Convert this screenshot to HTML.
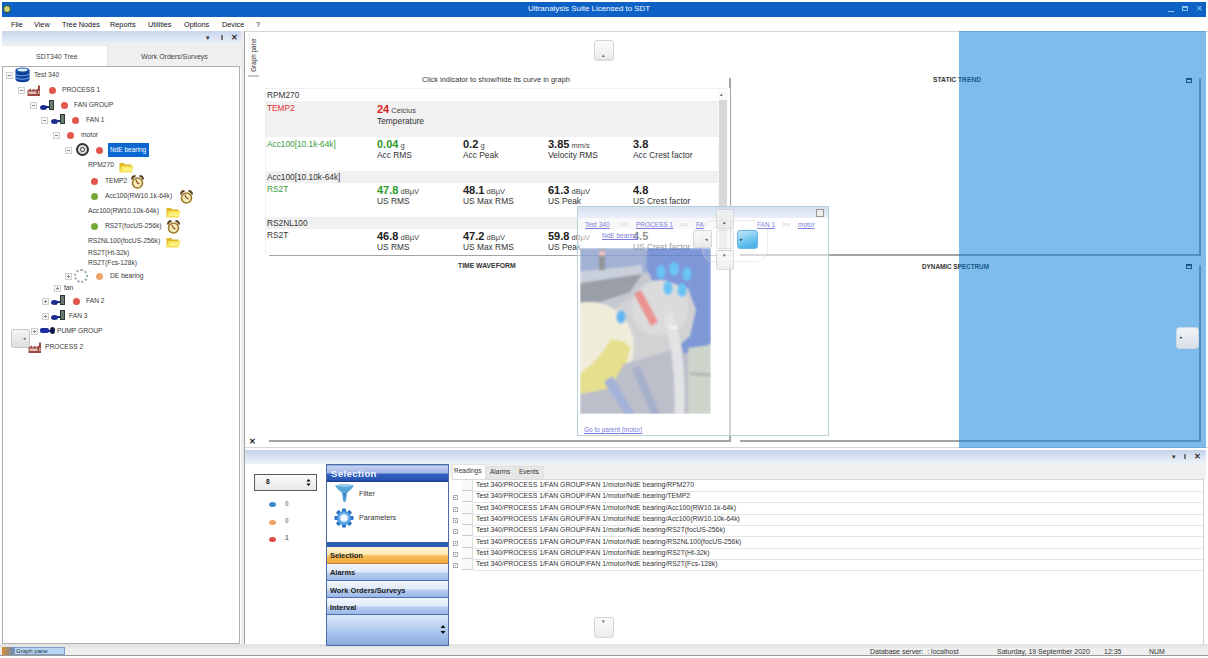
<!DOCTYPE html>
<html><head><meta charset="utf-8">
<style>
*{margin:0;padding:0;box-sizing:border-box}
html,body{width:1208px;height:658px;overflow:hidden;background:#fff;font-family:"Liberation Sans",sans-serif;color:#333}
.a{position:absolute}
.t{position:absolute;white-space:nowrap;line-height:1}
</style></head><body><div id="root" style="position:absolute;left:0;top:0;width:1208px;height:658px">
<div class="a" style="left:0;top:0;width:1208px;height:658px;background:#fff"></div>

<!-- TITLE BAR -->
<div class="a" style="left:2px;top:2px;width:1204px;height:14.5px;background:#0e62c6"></div>
<div class="a" style="left:3px;top:5px;width:8px;height:8px;border-radius:50%;background:#c9d27a;border:1px solid #3a4a20"></div>
<div class="t" style="left:528px;top:5px;font-size:7.95px;color:#f4f8ff">Ultranalysis Suite Licensed to SDT</div>
<div class="a" style="left:1168px;top:11px;width:6px;height:1px;background:#8cc4f4"></div>
<div class="a" style="left:1182px;top:6px;width:6px;height:5px;border:1px solid #8cc4f4;border-top-width:2px"></div>
<div class="t" style="left:1196px;top:5px;font-size:7.5px;color:#8cc4f4">&#x2715;</div>

<!-- MENU -->
<div class="t" style="left:11px;top:21px;font-size:7.3px;color:#111">File</div>
<div class="t" style="left:34px;top:21px;font-size:7.3px;color:#111">View</div>
<div class="t" style="left:62px;top:21px;font-size:7.3px;color:#111">Tree Nodes</div>
<div class="t" style="left:110px;top:21px;font-size:7.3px;color:#111">Reports</div>
<div class="t" style="left:148px;top:21px;font-size:7.3px;color:#111">Utilities</div>
<div class="t" style="left:184px;top:21px;font-size:7.3px;color:#111">Options</div>
<div class="t" style="left:222px;top:21px;font-size:7.3px;color:#111">Device</div>
<div class="t" style="left:256px;top:21px;font-size:7.3px;color:#111">?</div>


<!-- LEFT PANEL -->
<div class="a" style="left:2px;top:31px;width:240px;height:14px;background:linear-gradient(#c8d6ec,#e2eaf6 70%,#edf1f8)"></div>
<div class="a" style="left:241px;top:31px;width:3px;height:614px;background:#ececec"></div>
<div class="a" style="left:244px;top:31px;width:1px;height:614px;background:#a0a0a0"></div>
<div class="t" style="left:206px;top:34px;font-size:7px;color:#333">&#x25BE;</div>
<div class="a" style="left:221px;top:35px;width:2px;height:5px;border:1px solid #777;border-bottom-width:1px"></div>
<div class="t" style="left:231px;top:34px;font-size:8px;color:#333;font-weight:bold">&#x2715;</div>
<div class="a" style="left:2px;top:45px;width:239px;height:22px;background:#efefef"></div>
<div class="a" style="left:2px;top:45px;width:106px;height:22px;background:#fff;border-top:1px solid #e8e8e8;border-right:1px solid #e0e0e0"></div>
<div class="t" style="left:36px;top:53px;font-size:7px;color:#444">SDT340 Tree</div>
<div class="t" style="left:141px;top:53px;font-size:7px;color:#444">Work Orders/Surveys</div>
<div class="a" style="left:2px;top:66px;width:238px;height:578px;border:1px solid #b0b0b0;background:#fff"></div>
<!-- TREE -->
<div class="a" style="left:6px;top:72px;width:7px;height:7px;border:1px solid #cfcfcf;background:#f8f8f8"><div class="a" style="left:1px;top:2px;width:3px;height:1px;background:#888"></div></div>
<svg class="a" style="left:15px;top:67px" width="15" height="16" viewBox="0 0 15 16"><path d="M0.5 3 V12.5 A7 2.8 0 0 0 14.5 12.5 V3 Z" fill="#0f3e94"/><path d="M0.5 6.2 A7 2.6 0 0 0 14.5 6.2" stroke="#6aa4ec" stroke-width="1.1" fill="none"/><path d="M0.5 9.6 A7 2.6 0 0 0 14.5 9.6" stroke="#6aa4ec" stroke-width="1.1" fill="none"/><ellipse cx="7.5" cy="3" rx="7" ry="2.6" fill="#1a56b0"/><ellipse cx="7.5" cy="3" rx="5" ry="1.4" fill="#e0f0ff"/></svg>
<div class="t" style="left:34px;top:71px;font-size:6.7px;color:#3a3a3a;margin-top:1px">Test 340</div>
<div class="a" style="left:18px;top:87px;width:7px;height:7px;border:1px solid #cfcfcf;background:#f8f8f8"><div class="a" style="left:1px;top:2px;width:3px;height:1px;background:#888"></div></div>
<svg class="a" style="left:27px;top:85px" width="15" height="11" viewBox="0 0 15 11"><path d="M0.5 11 V5.5 L4 3.5 V5.5 L7.5 3.5 V5.5 L11 3.5 V0.5 H13 V11 Z" fill="#9a4a44"/><rect x="1.5" y="6.5" width="8" height="2.5" fill="#e4bcb4"/><rect x="11" y="6" width="1.5" height="3" fill="#d8a8a0"/></svg>
<div class="a" style="left:49px;top:87px;width:7px;height:7px;border-radius:50%;background:#e2574c"></div>
<div class="t" style="left:62px;top:86px;font-size:6.7px;color:#3a3a3a;margin-top:1px">PROCESS 1</div>
<div class="a" style="left:30px;top:102px;width:7px;height:7px;border:1px solid #cfcfcf;background:#f8f8f8"><div class="a" style="left:1px;top:2px;width:3px;height:1px;background:#888"></div></div>
<div class="a" style="left:40px;top:99px;width:15px;height:12px"><div class="a" style="left:0;top:6px;width:7px;height:5px;border-radius:50%;background:#1c2c8c"></div><div class="a" style="left:6px;top:7px;width:3px;height:2px;background:#1c2c8c"></div><div class="a" style="left:9px;top:1px;width:5px;height:10px;background:#6a7a70;border:1px solid #2a3a30"></div></div>
<div class="a" style="left:61px;top:102px;width:7px;height:7px;border-radius:50%;background:#e2574c"></div>
<div class="t" style="left:74px;top:101px;font-size:6.7px;color:#3a3a3a;margin-top:1px">FAN GROUP</div>
<div class="a" style="left:41px;top:117px;width:7px;height:7px;border:1px solid #cfcfcf;background:#f8f8f8"><div class="a" style="left:1px;top:2px;width:3px;height:1px;background:#888"></div></div>
<div class="a" style="left:51px;top:113px;width:15px;height:12px"><div class="a" style="left:0;top:6px;width:7px;height:5px;border-radius:50%;background:#1c2c8c"></div><div class="a" style="left:6px;top:7px;width:3px;height:2px;background:#1c2c8c"></div><div class="a" style="left:9px;top:1px;width:5px;height:10px;background:#6a7a70;border:1px solid #2a3a30"></div></div>
<div class="a" style="left:72px;top:117px;width:7px;height:7px;border-radius:50%;background:#e2574c"></div>
<div class="t" style="left:86px;top:116px;font-size:6.7px;color:#3a3a3a;margin-top:1px">FAN 1</div>
<div class="a" style="left:53px;top:132px;width:7px;height:7px;border:1px solid #cfcfcf;background:#f8f8f8"><div class="a" style="left:1px;top:2px;width:3px;height:1px;background:#888"></div></div>
<div class="a" style="left:67px;top:132px;width:7px;height:7px;border-radius:50%;background:#e2574c"></div>
<div class="t" style="left:81px;top:131px;font-size:6.7px;color:#3a3a3a;margin-top:1px">motor</div>
<div class="a" style="left:65px;top:147px;width:7px;height:7px;border:1px solid #cfcfcf;background:#f8f8f8"><div class="a" style="left:1px;top:2px;width:3px;height:1px;background:#888"></div></div>
<div class="a" style="left:76px;top:143px;width:13px;height:13px;border-radius:50%;border:2px solid #333;background:#ddd"><div class="a" style="left:2px;top:2px;width:5px;height:5px;border-radius:50%;border:1px solid #333;background:#fff"></div></div>
<div class="a" style="left:96px;top:147px;width:7px;height:7px;border-radius:50%;background:#e2574c"></div>
<div class="a" style="left:108px;top:143px;width:41px;height:14px;background:#0a68d0"></div>
<div class="t" style="left:110px;top:147px;font-size:6.5px;color:#fff;">NdE bearing</div>
<div class="t" style="left:88px;top:161px;font-size:6.7px;color:#3a3a3a;margin-top:1px">RPM270</div>
<svg class="a" style="left:119px;top:162px" width="15" height="11" viewBox="0 0 15 11"><path d="M0.5 1 L5 1 L6.5 2.5 L12.5 2.5 L12.5 10 L0.5 10 Z" fill="#e0b828"/><path d="M2 4 L14.5 4 L12.5 10.5 L0.5 10.5 Z" fill="#f8e050"/><path d="M4 5.5 L13 5.5 L12 9 L3 9 Z" fill="#fcf080"/></svg>
<div class="a" style="left:91px;top:178px;width:7px;height:7px;border-radius:50%;background:#e2574c"></div>
<div class="t" style="left:105px;top:177px;font-size:6.7px;color:#3a3a3a;margin-top:1px">TEMP2</div>
<svg class="a" style="left:131px;top:175px" width="13" height="14" viewBox="0 0 13 14"><path d="M1 4.5 Q1 1 4.5 1" stroke="#5a4020" stroke-width="2" fill="none"/><path d="M8.5 1 Q12 1 12 4.5" stroke="#5a4020" stroke-width="2" fill="none"/><circle cx="6.5" cy="8" r="5" fill="#f2ecb8" stroke="#a07828" stroke-width="1.6"/><path d="M6.5 8 L4.8 4.8 M6.5 8 L8.5 9" stroke="#8a3a20" stroke-width="1.1"/></svg>
<div class="a" style="left:91px;top:193px;width:7px;height:7px;border-radius:50%;background:#74a83a"></div>
<div class="t" style="left:105px;top:192px;font-size:6.7px;color:#3a3a3a;margin-top:1px">Acc100(RW10.1k-64k)</div>
<svg class="a" style="left:180px;top:190px" width="13" height="14" viewBox="0 0 13 14"><path d="M1 4.5 Q1 1 4.5 1" stroke="#5a4020" stroke-width="2" fill="none"/><path d="M8.5 1 Q12 1 12 4.5" stroke="#5a4020" stroke-width="2" fill="none"/><circle cx="6.5" cy="8" r="5" fill="#f2ecb8" stroke="#a07828" stroke-width="1.6"/><path d="M6.5 8 L4.8 4.8 M6.5 8 L8.5 9" stroke="#8a3a20" stroke-width="1.1"/></svg>
<div class="t" style="left:88px;top:207px;font-size:6.7px;color:#3a3a3a;margin-top:1px">Acc100(RW10.10k-64k)</div>
<svg class="a" style="left:166px;top:207px" width="15" height="11" viewBox="0 0 15 11"><path d="M0.5 1 L5 1 L6.5 2.5 L12.5 2.5 L12.5 10 L0.5 10 Z" fill="#e0b828"/><path d="M2 4 L14.5 4 L12.5 10.5 L0.5 10.5 Z" fill="#f8e050"/><path d="M4 5.5 L13 5.5 L12 9 L3 9 Z" fill="#fcf080"/></svg>
<div class="a" style="left:91px;top:223px;width:7px;height:7px;border-radius:50%;background:#74a83a"></div>
<div class="t" style="left:105px;top:222px;font-size:6.7px;color:#3a3a3a;margin-top:1px">RS2T(focUS-256k)</div>
<svg class="a" style="left:167px;top:220px" width="13" height="14" viewBox="0 0 13 14"><path d="M1 4.5 Q1 1 4.5 1" stroke="#5a4020" stroke-width="2" fill="none"/><path d="M8.5 1 Q12 1 12 4.5" stroke="#5a4020" stroke-width="2" fill="none"/><circle cx="6.5" cy="8" r="5" fill="#f2ecb8" stroke="#a07828" stroke-width="1.6"/><path d="M6.5 8 L4.8 4.8 M6.5 8 L8.5 9" stroke="#8a3a20" stroke-width="1.1"/></svg>
<div class="t" style="left:88px;top:237px;font-size:6.7px;color:#3a3a3a;margin-top:1px">RS2NL100(focUS-256k)</div>
<svg class="a" style="left:166px;top:237px" width="15" height="11" viewBox="0 0 15 11"><path d="M0.5 1 L5 1 L6.5 2.5 L12.5 2.5 L12.5 10 L0.5 10 Z" fill="#e0b828"/><path d="M2 4 L14.5 4 L12.5 10.5 L0.5 10.5 Z" fill="#f8e050"/><path d="M4 5.5 L13 5.5 L12 9 L3 9 Z" fill="#fcf080"/></svg>
<div class="t" style="left:88px;top:249px;font-size:6.7px;color:#3a3a3a;margin-top:1px">RS2T(Ht-32k)</div>
<div class="t" style="left:88px;top:259px;font-size:6.7px;color:#3a3a3a;margin-top:1px">RS2T(Fcs-128k)</div>
<div class="a" style="left:65px;top:273px;width:7px;height:7px;border:1px solid #cfcfcf;background:#f8f8f8"><div class="a" style="left:1px;top:2px;width:3px;height:1px;background:#888"></div><div class="a" style="left:2px;top:1px;width:1px;height:3px;background:#888"></div></div>
<div class="a" style="left:74px;top:269px;width:14px;height:14px;border-radius:50%;border:2px dotted #9aa;background:#fff"></div>
<div class="a" style="left:96px;top:273px;width:7px;height:7px;border-radius:50%;background:#f0a56a"></div>
<div class="t" style="left:110px;top:272px;font-size:6.7px;color:#3a3a3a;margin-top:1px">DE bearing</div>
<div class="a" style="left:54px;top:285px;width:7px;height:7px;border:1px solid #cfcfcf;background:#f8f8f8"><div class="a" style="left:1px;top:2px;width:3px;height:1px;background:#888"></div><div class="a" style="left:2px;top:1px;width:1px;height:3px;background:#888"></div></div>
<div class="t" style="left:64px;top:284px;font-size:6.7px;color:#3a3a3a;margin-top:1px">fan</div>
<div class="a" style="left:42px;top:298px;width:7px;height:7px;border:1px solid #cfcfcf;background:#f8f8f8"><div class="a" style="left:1px;top:2px;width:3px;height:1px;background:#888"></div><div class="a" style="left:2px;top:1px;width:1px;height:3px;background:#888"></div></div>
<div class="a" style="left:51px;top:294px;width:15px;height:12px"><div class="a" style="left:0;top:6px;width:7px;height:5px;border-radius:50%;background:#1c2c8c"></div><div class="a" style="left:6px;top:7px;width:3px;height:2px;background:#1c2c8c"></div><div class="a" style="left:9px;top:1px;width:5px;height:10px;background:#6a7a70;border:1px solid #2a3a30"></div></div>
<div class="a" style="left:73px;top:298px;width:7px;height:7px;border-radius:50%;background:#e2574c"></div>
<div class="t" style="left:86px;top:297px;font-size:6.7px;color:#3a3a3a;margin-top:1px">FAN 2</div>
<div class="a" style="left:42px;top:313px;width:7px;height:7px;border:1px solid #cfcfcf;background:#f8f8f8"><div class="a" style="left:1px;top:2px;width:3px;height:1px;background:#888"></div><div class="a" style="left:2px;top:1px;width:1px;height:3px;background:#888"></div></div>
<div class="a" style="left:51px;top:309px;width:15px;height:12px"><div class="a" style="left:0;top:6px;width:7px;height:5px;border-radius:50%;background:#1c2c8c"></div><div class="a" style="left:6px;top:7px;width:3px;height:2px;background:#1c2c8c"></div><div class="a" style="left:9px;top:1px;width:5px;height:10px;background:#6a7a70;border:1px solid #2a3a30"></div></div>
<div class="t" style="left:69px;top:312px;font-size:6.7px;color:#3a3a3a;margin-top:1px">FAN 3</div>
<div class="a" style="left:31px;top:328px;width:7px;height:7px;border:1px solid #cfcfcf;background:#f8f8f8"><div class="a" style="left:1px;top:2px;width:3px;height:1px;background:#888"></div><div class="a" style="left:2px;top:1px;width:1px;height:3px;background:#888"></div></div>
<div class="a" style="left:40px;top:328px;width:9px;height:5px;background:#1c2c9c;border-radius:2px"></div><div class="a" style="left:48px;top:330px;width:3px;height:2px;background:#1c2c9c"></div><div class="a" style="left:50px;top:327px;width:5px;height:7px;background:#101848;border-radius:50%"></div>
<div class="t" style="left:57px;top:327px;font-size:6.7px;color:#3a3a3a;margin-top:1px">PUMP GROUP</div>
<div class="a" style="left:11px;top:329px;width:19px;height:19px;background:linear-gradient(#f4f4f4,#dedede);border:1px solid #c8c8c8;border-radius:2px"><div class="t" style="left:11px;top:6px;font-size:5px;color:#666">&#x25C2;</div></div>
<svg class="a" style="left:28px;top:342px" width="15" height="11" viewBox="0 0 15 11"><path d="M0.5 11 V5.5 L4 3.5 V5.5 L7.5 3.5 V5.5 L11 3.5 V0.5 H13 V11 Z" fill="#9a4a44"/><rect x="1.5" y="6.5" width="8" height="2.5" fill="#e4bcb4"/><rect x="11" y="6" width="1.5" height="3" fill="#d8a8a0"/></svg>
<div class="t" style="left:45px;top:343px;font-size:6.7px;color:#3a3a3a;margin-top:1px">PROCESS 2</div>

<!-- MAIN AREA -->
<div class="a" style="left:245px;top:31px;width:963px;height:1px;background:#d4d4d4"></div>
<div class="a" style="left:248px;top:33px;width:11px;height:44px;background:linear-gradient(90deg,#f6f6f6,#fff);border-bottom:2px solid #c8c8c8"></div>
<div class="t" style="left:232px;top:52px;font-size:6.3px;color:#333;transform:rotate(-90deg);transform-origin:center;width:44px;text-align:center">Graph pane</div>
<div class="a" style="left:594px;top:40px;width:20px;height:20px;border:1px solid #d4d4d4;border-radius:3px;background:linear-gradient(#fbfbfb,#ececec);box-shadow:0 1px 1px #ddd"></div>
<div class="t" style="left:602px;top:53px;font-size:5px;color:#555">&#x25B4;</div>
<div class="t" style="left:422px;top:76px;font-size:7.4px;color:#333">Click indicator to show/hide its curve in graph</div>
<div class="t" style="left:933px;top:77px;font-size:6.7px;color:#333;font-weight:bold">STATIC TREND</div>
<div class="t" style="left:458px;top:263px;font-size:6.8px;color:#333;font-weight:bold">TIME WAVEFORM</div>
<div class="t" style="left:922px;top:264px;font-size:6.35px;color:#333;font-weight:bold">DYNAMIC SPECTRUM</div>
<!-- panel frames -->
<div class="a" style="left:729px;top:78px;width:2px;height:178px;background:#a4a4a4"></div>
<div class="a" style="left:269px;top:254px;width:462px;height:2px;background:#a4a4a4"></div>
<div class="a" style="left:1199px;top:78px;width:2px;height:178px;background:#a4a4a4"></div>
<div class="a" style="left:740px;top:254px;width:461px;height:2px;background:#a4a4a4"></div>
<div class="a" style="left:1186px;top:78px;width:6px;height:5px;border:1px solid #333;border-top-width:2px"></div>
<div class="a" style="left:729px;top:265px;width:2px;height:177px;background:#a4a4a4"></div>
<div class="a" style="left:269px;top:440px;width:462px;height:2px;background:#a4a4a4"></div>
<div class="a" style="left:1199px;top:265px;width:2px;height:177px;background:#a4a4a4"></div>
<div class="a" style="left:740px;top:440px;width:461px;height:2px;background:#a4a4a4"></div>
<div class="a" style="left:1186px;top:264px;width:6px;height:5px;border:1px solid #333;border-top-width:2px"></div>
<div class="t" style="left:249px;top:438px;font-size:8px;color:#222;font-weight:bold">&#x2715;</div>
<div class="a" style="left:245px;top:447px;width:963px;height:1px;background:#d8d8d8"></div>
<!-- TABLE -->
<div class="a" style="left:265px;top:88px;width:465px;height:167px;background:#fff;border-top:1px solid #f0f0f0;border-left:1px solid #f0f0f0"></div>
<div class="a" style="left:266px;top:101px;width:452px;height:36px;background:#f1f1f1"></div>
<div class="a" style="left:266px;top:171px;width:452px;height:12px;background:#f1f1f1"></div>
<div class="a" style="left:266px;top:217px;width:452px;height:12px;background:#f1f1f1"></div>
<div class="a" style="left:718px;top:89px;width:10px;height:165px;background:#fafafa"></div>
<div class="a" style="left:719px;top:100px;width:8px;height:154px;background:#d8d8d8"></div>
<div class="t" style="left:720px;top:92px;font-size:5px;color:#666">&#x25B4;</div>
<div class="t" style="left:267px;top:91px;font-size:8.3px;color:#333;">RPM270</div>
<div class="t" style="left:267px;top:104px;font-size:8.3px;color:#e03030;">TEMP2</div>
<div class="t" style="left:267px;top:140px;font-size:8.3px;color:#3a9a3a;">Acc100[10.1k-64k]</div>
<div class="t" style="left:267px;top:173px;font-size:8.3px;color:#333;">Acc100[10.10k-64k]</div>
<div class="t" style="left:267px;top:185px;font-size:8.3px;color:#3a9a3a;">RS2T</div>
<div class="t" style="left:267px;top:219px;font-size:8.3px;color:#333;">RS2NL100</div>
<div class="t" style="left:267px;top:231px;font-size:8.3px;color:#333;">RS2T</div>
<div class="t" style="left:377px;top:104px;font-size:11px;font-weight:bold;color:#e02020">24<span style="font-size:7.5px;font-weight:normal;color:#444"> Celcius</span></div>
<div class="t" style="left:377px;top:117px;font-size:8.4px;color:#333;">Temperature</div>
<div class="t" style="left:377px;top:139px;font-size:11px;font-weight:bold;color:#2a9a2a">0.04<span style="font-size:7.5px;font-weight:normal;color:#444"> g</span></div>
<div class="t" style="left:377px;top:151px;font-size:8.4px;color:#333;">Acc RMS</div>
<div class="t" style="left:463px;top:139px;font-size:11px;font-weight:bold;color:#222">0.2<span style="font-size:7.5px;font-weight:normal;color:#444"> g</span></div>
<div class="t" style="left:463px;top:151px;font-size:8.4px;color:#333;">Acc Peak</div>
<div class="t" style="left:548px;top:139px;font-size:11px;font-weight:bold;color:#222">3.85<span style="font-size:7.5px;font-weight:normal;color:#444"> mm/s</span></div>
<div class="t" style="left:548px;top:151px;font-size:8.4px;color:#333;">Velocity RMS</div>
<div class="t" style="left:633px;top:139px;font-size:11px;font-weight:bold;color:#222">3.8<span style="font-size:7.5px;font-weight:normal;color:#444"> </span></div>
<div class="t" style="left:633px;top:151px;font-size:8.4px;color:#333;">Acc Crest factor</div>
<div class="t" style="left:377px;top:185px;font-size:11px;font-weight:bold;color:#2a9a2a">47.8<span style="font-size:7.5px;font-weight:normal;color:#444"> dB&micro;V</span></div>
<div class="t" style="left:377px;top:197px;font-size:8.4px;color:#333;">US RMS</div>
<div class="t" style="left:463px;top:185px;font-size:11px;font-weight:bold;color:#222">48.1<span style="font-size:7.5px;font-weight:normal;color:#444"> dB&micro;V</span></div>
<div class="t" style="left:463px;top:197px;font-size:8.4px;color:#333;">US Max RMS</div>
<div class="t" style="left:548px;top:185px;font-size:11px;font-weight:bold;color:#222">61.3<span style="font-size:7.5px;font-weight:normal;color:#444"> dB&micro;V</span></div>
<div class="t" style="left:548px;top:197px;font-size:8.4px;color:#333;">US Peak</div>
<div class="t" style="left:633px;top:185px;font-size:11px;font-weight:bold;color:#222">4.8<span style="font-size:7.5px;font-weight:normal;color:#444"> </span></div>
<div class="t" style="left:633px;top:197px;font-size:8.4px;color:#333;">US Crest factor</div>
<div class="t" style="left:377px;top:231px;font-size:11px;font-weight:bold;color:#222">46.8<span style="font-size:7.5px;font-weight:normal;color:#444"> dB&micro;V</span></div>
<div class="t" style="left:377px;top:243px;font-size:8.4px;color:#333;">US RMS</div>
<div class="t" style="left:463px;top:231px;font-size:11px;font-weight:bold;color:#222">47.2<span style="font-size:7.5px;font-weight:normal;color:#444"> dB&micro;V</span></div>
<div class="t" style="left:463px;top:243px;font-size:8.4px;color:#333;">US Max RMS</div>
<div class="t" style="left:548px;top:231px;font-size:11px;font-weight:bold;color:#222">59.8<span style="font-size:7.5px;font-weight:normal;color:#444"> dB&micro;V</span></div>
<div class="t" style="left:548px;top:243px;font-size:8.4px;color:#333;">US Peak</div>
<div class="t" style="left:633px;top:231px;font-size:11px;font-weight:bold;color:#222">4.5<span style="font-size:7.5px;font-weight:normal;color:#444"> </span></div>
<div class="t" style="left:633px;top:243px;font-size:8.4px;color:#333;">US Crest factor</div>

<!-- POPUP -->
<div class="a" style="left:577px;top:206px;width:252px;height:230px;background:rgba(255,255,255,0.5);border:1px solid #b8d0d8"></div>
<div class="a" style="left:578px;top:207px;width:250px;height:11px;background:linear-gradient(rgba(200,216,236,0.8),rgba(226,234,246,0.7))"></div>
<div class="a" style="left:816px;top:209px;width:8px;height:8px;border:1px solid #999;background:#eee"></div>
<div class="t" style="left:585px;top:222px;font-size:6.5px;color:#7c7ce0;text-decoration:underline;text-decoration-thickness:0.5px">Test 340</div>
<div class="t" style="left:620px;top:222px;font-size:6.5px;color:#c8c8c8">&gt;&gt;</div>
<div class="t" style="left:636px;top:222px;font-size:6.5px;color:#7c7ce0;text-decoration:underline;text-decoration-thickness:0.5px">PROCESS 1</div>
<div class="t" style="left:680px;top:222px;font-size:6.5px;color:#c8c8c8">&gt;&gt;</div>
<div class="t" style="left:696px;top:222px;font-size:6.5px;color:#7c7ce0;text-decoration:underline;text-decoration-thickness:0.5px">FA</div>
<div class="t" style="left:757px;top:222px;font-size:6.5px;color:#7c7ce0;text-decoration:underline;text-decoration-thickness:0.5px">FAN 1</div>
<div class="t" style="left:782px;top:222px;font-size:6.5px;color:#c8c8c8">&gt;&gt;</div>
<div class="t" style="left:798px;top:222px;font-size:6.5px;color:#7c7ce0;text-decoration:underline;text-decoration-thickness:0.5px">motor</div>
<div class="t" style="left:602px;top:233px;font-size:6.5px;color:#7c7ce0;text-decoration:underline;text-decoration-thickness:0.5px">NdE bearing</div>
<!-- photo -->
<div class="a" style="left:580px;top:248px;width:131px;height:166px;overflow:hidden;opacity:0.62">
<div style="filter:blur(1px);width:131px;height:166px"><svg width="131" height="166" viewBox="0 0 131 166">
<rect x="-5" y="-5" width="141" height="176" fill="#a4a8b4"/>
<rect x="-5" y="-5" width="141" height="30" fill="#6a84bc"/>
<path d="M-5 24 L62 17 L62 26 L-5 36 Z" fill="#aab4c6"/>
<path d="M-5 36 L62 26 L50 44 L20 54 L-5 54 Z" fill="#5c6472"/>
<rect x="19" y="2" width="6" height="20" fill="#50565e"/>
<rect x="19" y="3" width="6" height="5" fill="#e0a0a0"/>
<path d="M68 -5 L136 -5 L136 90 L122 102 L104 106 L92 64 L76 42 L66 18 Z" fill="#3058c0"/>
<path d="M22 70 L52 48 L82 32 L108 40 L116 62 L110 88 L92 104 L52 118 L34 110 Z" fill="#b8b8bc"/>
<circle cx="80" cy="60" r="28" fill="#c6c6c6"/>
<circle cx="10" cy="98" r="44" fill="#e6e2c4"/>
<path d="M-5 130 Q22 110 30 92 Q44 90 50 100 Q44 130 30 142 L-5 146 Z" fill="#d8cc48"/>
<path d="M54 46 L61 42 L78 74 L71 78 Z" fill="#e05050"/>
<path d="M44 116 L92 102 L108 106 L108 172 L-5 172 L-5 148 L30 140 Z" fill="#9498aa"/>
<path d="M32 128 L58 172 L49 172 L24 134 Z" fill="#6e84c0"/>
<path d="M60 118 L82 172 L74 172 L52 121 Z" fill="#7080ac"/>
<path d="M108 100 L136 96 L136 172 L108 172 Z" fill="#b0bcac"/>
<path d="M92 62 Q108 110 104 172 L94 172 Q97 118 84 70 Z" fill="#d0d2d6"/>

<path d="M110 124 L136 126 L136 129 L110 127 Z" fill="#808a80"/>
<ellipse cx="41" cy="69" rx="4.5" ry="6.5" fill="#0a8ce8"/>
<ellipse cx="81" cy="24" rx="4.5" ry="7" fill="#10a0f0"/>
<ellipse cx="94" cy="21" rx="5" ry="7" fill="#10a0f0"/>
<ellipse cx="107" cy="26" rx="4.5" ry="7" fill="#10a0f0"/>
<ellipse cx="88" cy="40" rx="4.5" ry="7" fill="#10a0f0"/>
<ellipse cx="102" cy="42" rx="4.5" ry="7" fill="#10a0f0"/>
<circle cx="47" cy="39" r="3.5" fill="none" stroke="#707070" stroke-width="1.6"/>
<rect x="90" y="78" width="7" height="3" fill="#f4f4f4"/>
</svg></div>
</div>
<div class="t" style="left:584px;top:427px;font-size:6.5px;color:#7c7ce0;text-decoration:underline;text-decoration-thickness:0.5px">Go to parent [motor]</div>
<!-- nav control -->
<div class="a" style="left:702px;top:220px;width:66px;height:42px;border-radius:12px;border:1px solid rgba(210,210,210,0.45);background:rgba(255,255,255,0.15)"></div>
<div class="a" style="left:716px;top:209px;width:18px;height:20px;border:1px solid rgba(200,200,200,0.6);border-radius:2px;background:linear-gradient(rgba(246,246,246,0.7),rgba(226,226,226,0.7))"></div>
<div class="t" style="left:723px;top:220px;font-size:5px;color:#555">&#x25B4;</div>
<div class="a" style="left:693px;top:230px;width:19px;height:18px;border:1px solid rgba(200,200,200,0.6);border-radius:2px;background:linear-gradient(rgba(246,246,246,0.7),rgba(226,226,226,0.7))"></div>
<div class="t" style="left:705px;top:237px;font-size:5px;color:#555">&#x25C2;</div>
<div class="a" style="left:716px;top:230px;width:18px;height:19px;border:1px solid rgba(210,210,210,0.5);border-radius:2px;background:rgba(240,240,240,0.4)"></div>
<div class="a" style="left:737px;top:230px;width:21px;height:19px;border:1px solid #6ab8e4;border-radius:3px;background:linear-gradient(160deg,#c4e8fa,#5cbcec 70%,#46aee6)"></div>
<div class="t" style="left:740px;top:237px;font-size:5px;color:#234">&#x25B8;</div>
<div class="a" style="left:716px;top:250px;width:18px;height:20px;border:1px solid rgba(200,200,200,0.6);border-radius:2px;background:linear-gradient(rgba(250,250,250,0.75),rgba(232,232,232,0.7))"></div>
<div class="t" style="left:723px;top:253px;font-size:5px;color:#555">&#x25BE;</div>
<!-- BLUE OVERLAY -->
<div class="a" style="left:959px;top:31px;width:247px;height:417px;background:rgba(0,121,215,0.5)"></div>
<div class="a" style="left:1176px;top:327px;width:23px;height:22px;border:1px solid #c8d8e8;border-radius:3px;background:linear-gradient(#f0f4f8,#d8e0e8)"></div>
<div class="t" style="left:1180px;top:335px;font-size:5px;color:#345">&#x25B8;</div>

<!-- STATUS BAR -->
<div class="a" style="left:0;top:644px;width:1208px;height:11px;background:linear-gradient(#e4e4e4,#e4e4e4 3px,#efefef 4px)"></div>
<div class="a" style="left:0;top:655px;width:1208px;height:1px;background:#9a9a9a"></div>
<div class="a" style="left:2px;top:647px;width:12px;height:8px;background:linear-gradient(90deg,#d98c2a,#6a8cc0)"></div>
<div class="a" style="left:14px;top:647px;width:51px;height:8px;background:#b8d4f0;border:1px solid #7a9cc8"></div>
<div class="t" style="left:16px;top:648px;font-size:6px;color:#234">Graph pane</div>
<div class="t" style="left:870px;top:648px;font-size:7px;color:#333">Database server:&nbsp; : localhost</div>
<div class="t" style="left:997px;top:648px;font-size:7px;color:#333">Saturday, 19 September 2020</div>
<div class="t" style="left:1104px;top:648px;font-size:7px;color:#333">12:35</div>
<div class="t" style="left:1149px;top:648px;font-size:7px;color:#333">NUM</div>
<!-- BOTTOM PANEL -->
<div class="a" style="left:245px;top:450px;width:961px;height:14px;background:linear-gradient(#c4d3ea,#dfe7f4 60%,#eef2f8)"></div>
<div class="t" style="left:1172px;top:453px;font-size:7px;color:#333">&#x25BE;</div>
<div class="a" style="left:1184px;top:454px;width:2px;height:5px;border:1px solid #777"></div>
<div class="t" style="left:1194px;top:453px;font-size:8px;color:#333;font-weight:bold">&#x2715;</div>
<div class="a" style="left:245px;top:464px;width:961px;height:180px;background:#fff"></div>


<!-- legend -->
<div class="a" style="left:254px;top:474px;width:63px;height:17px;border:1px solid #5a5a5a;background:linear-gradient(#fafafa,#e8e8e8)"></div>
<div class="t" style="left:266px;top:479px;font-size:6.5px;color:#111;font-weight:bold">8</div>
<svg class="a" style="left:306px;top:478px" width="5" height="9" viewBox="0 0 5 9"><path d="M0.3 3.5 L2.5 1 L4.7 3.5 Z M0.3 5.5 L2.5 8 L4.7 5.5 Z" fill="#111"/></svg>
<div class="a" style="left:269px;top:502px;width:7px;height:5px;border-radius:50%;background:#3a8ad0"></div>
<div class="t" style="left:285px;top:501px;font-size:6.5px;color:#8a92a8;font-weight:bold">0</div>
<div class="a" style="left:269px;top:520px;width:7px;height:5px;border-radius:50%;background:#f0a060"></div>
<div class="t" style="left:285px;top:518px;font-size:6.5px;color:#8a92a8;font-weight:bold">0</div>
<div class="a" style="left:269px;top:537px;width:7px;height:5px;border-radius:50%;background:#e04848"></div>
<div class="t" style="left:285px;top:535px;font-size:6.5px;color:#5a7080;font-weight:bold">1</div>
<!-- selection panel -->
<div class="a" style="left:326px;top:464px;width:123px;height:182px;border:1px solid #4a6aa8;background:#fff"></div>
<div class="a" style="left:327px;top:465px;width:121px;height:17px;background:linear-gradient(#7088b0 0,#c4d2f4 1px,#a4b8e6 48%,#3462c0 52%,#2a56b4 85%,#1a3a88 100%)"></div>
<div class="t" style="left:331px;top:469px;font-size:9.6px;color:#f0f4ff;font-weight:bold;letter-spacing:0.35px">Selection</div>
<svg class="a" style="left:334px;top:483px" width="21" height="20" viewBox="0 0 21 20"><path d="M1 2.5 Q10.5 0 20 2.5 Q18 6 13 10 L12 18 Q10.5 20 9 18 L8 10 Q3 6 1 2.5 Z" fill="#58a6d8"/><path d="M2 2.5 Q10.5 0.5 19 2.5 Q10.5 5 2 2.5 Z" fill="#9ad0f0"/><path d="M9 10 L12 10 L11 17 Z" fill="#3a86c0"/></svg>
<div class="t" style="left:359px;top:490px;font-size:7.2px;color:#333">Filter</div>
<svg class="a" style="left:334px;top:508px" width="20" height="20" viewBox="0 0 20 20"><defs><radialGradient id="gg" gradientUnits="userSpaceOnUse" cx="10" cy="10" r="10"><stop offset="0.35" stop-color="#8cccf4"/><stop offset="0.75" stop-color="#2a7ad0"/><stop offset="1" stop-color="#1a5cb8"/></radialGradient></defs><g fill="url(#gg)"><circle cx="10" cy="10" r="7"/><rect x="8" y="0.5" width="4" height="5" rx="1" transform="rotate(0 10 10)"/><rect x="8" y="0.5" width="4" height="5" rx="1" transform="rotate(45 10 10)"/><rect x="8" y="0.5" width="4" height="5" rx="1" transform="rotate(90 10 10)"/><rect x="8" y="0.5" width="4" height="5" rx="1" transform="rotate(135 10 10)"/><rect x="8" y="0.5" width="4" height="5" rx="1" transform="rotate(180 10 10)"/><rect x="8" y="0.5" width="4" height="5" rx="1" transform="rotate(225 10 10)"/><rect x="8" y="0.5" width="4" height="5" rx="1" transform="rotate(270 10 10)"/><rect x="8" y="0.5" width="4" height="5" rx="1" transform="rotate(315 10 10)"/></g><circle cx="10" cy="10" r="3.6" fill="#f4f8fc"/></svg>
<div class="t" style="left:359px;top:514px;font-size:7.2px;color:#333">Parameters</div>
<div class="a" style="left:327px;top:542px;width:121px;height:5px;background:#2a5cb0"></div>
<div class="a" style="left:327px;top:547px;width:121px;height:17px;background:linear-gradient(#fdf4d4,#fce8b0 45%,#f6bc58 58%,#f0a83a);border-bottom:1px solid #b88038"></div>
<div class="t" style="left:330px;top:552px;font-size:7.4px;color:#1a1a1a;font-weight:bold">Selection</div>
<div class="a" style="left:327px;top:564px;width:121px;height:17px;background:linear-gradient(#f2f6fd,#e0e9f8 48%,#b8cdef 58%,#9cb8e8);border-bottom:1px solid #4a70b8"></div>
<div class="t" style="left:330px;top:569px;font-size:7.4px;color:#1a1a1a;font-weight:bold">Alarms</div>
<div class="a" style="left:327px;top:581px;width:121px;height:17px;background:linear-gradient(#f2f6fd,#e0e9f8 48%,#b8cdef 58%,#9cb8e8);border-bottom:1px solid #4a70b8"></div>
<div class="t" style="left:330px;top:587px;font-size:7.4px;color:#1a1a1a;font-weight:bold">Work Orders/Surveys</div>
<div class="a" style="left:327px;top:598px;width:121px;height:17px;background:linear-gradient(#f2f6fd,#e0e9f8 48%,#b8cdef 58%,#9cb8e8);border-bottom:1px solid #4a70b8"></div>
<div class="t" style="left:330px;top:604px;font-size:7.4px;color:#1a1a1a;font-weight:bold">Interval</div>
<div class="a" style="left:327px;top:615px;width:121px;height:30px;background:linear-gradient(#dce8f8,#a8c4ec 60%,#88acdf)"></div>
<svg class="a" style="left:440px;top:624px" width="6" height="11" viewBox="0 0 6 11"><path d="M0.5 4 L3 1 L5.5 4 Z M0.5 7 L3 10 L5.5 7 Z" fill="#111"/></svg>
<!-- readings -->
<div class="a" style="left:450px;top:464px;width:756px;height:15px;background:#efefef"></div>
<div class="a" style="left:452px;top:464px;width:34px;height:16px;background:#fff;border:1px solid #e4e4e4;border-bottom:none"></div>
<div class="a" style="left:486px;top:466px;width:58px;height:13px;background:#e6e6e6;border:1px solid #e0e0e0;border-bottom:none"></div>
<div class="t" style="left:454px;top:468px;font-size:6.5px;color:#333">Readings</div>
<div class="t" style="left:490px;top:469px;font-size:6.5px;color:#333">Alarms</div>
<div class="t" style="left:519px;top:469px;font-size:6.5px;color:#333">Events</div>
<div class="a" style="left:452px;top:479px;width:752px;height:1px;background:#d8d8d8"></div>
<div class="a" style="left:462px;top:480px;width:11px;height:11px;border-right:1px solid #ddd;border-bottom:1px solid #ccc;background:#fafafa"></div>
<div class="a" style="left:473px;top:491px;width:731px;height:1px;background:#e4e4e4"></div>
<div class="t" style="left:476px;top:482px;font-size:6.85px;color:#333">Test 340/PROCESS 1/FAN GROUP/FAN 1/motor/NdE bearing/RPM270</div>
<div class="a" style="left:462px;top:491px;width:11px;height:11px;border-right:1px solid #ddd;border-bottom:1px solid #ccc;background:#fafafa"></div>
<div class="a" style="left:473px;top:502px;width:731px;height:1px;background:#e4e4e4"></div>
<div class="a" style="left:453px;top:495px;width:5px;height:5px;border:1px solid #aaa"><div class="a" style="left:1px;top:1px;width:1px;height:1px;background:#888"></div></div>
<div class="t" style="left:476px;top:493px;font-size:6.85px;color:#333">Test 340/PROCESS 1/FAN GROUP/FAN 1/motor/NdE bearing/TEMP2</div>
<div class="a" style="left:462px;top:503px;width:11px;height:11px;border-right:1px solid #ddd;border-bottom:1px solid #ccc;background:#fafafa"></div>
<div class="a" style="left:473px;top:514px;width:731px;height:1px;background:#e4e4e4"></div>
<div class="a" style="left:453px;top:507px;width:5px;height:5px;border:1px solid #aaa"><div class="a" style="left:1px;top:1px;width:1px;height:1px;background:#888"></div></div>
<div class="t" style="left:476px;top:505px;font-size:6.85px;color:#333">Test 340/PROCESS 1/FAN GROUP/FAN 1/motor/NdE bearing/Acc100(RW10.1k-64k)</div>
<div class="a" style="left:462px;top:514px;width:11px;height:11px;border-right:1px solid #ddd;border-bottom:1px solid #ccc;background:#fafafa"></div>
<div class="a" style="left:473px;top:525px;width:731px;height:1px;background:#e4e4e4"></div>
<div class="a" style="left:453px;top:518px;width:5px;height:5px;border:1px solid #aaa"><div class="a" style="left:1px;top:1px;width:1px;height:1px;background:#888"></div></div>
<div class="t" style="left:476px;top:516px;font-size:6.85px;color:#333">Test 340/PROCESS 1/FAN GROUP/FAN 1/motor/NdE bearing/Acc100(RW10.10k-64k)</div>
<div class="a" style="left:462px;top:525px;width:11px;height:11px;border-right:1px solid #ddd;border-bottom:1px solid #ccc;background:#fafafa"></div>
<div class="a" style="left:473px;top:536px;width:731px;height:1px;background:#e4e4e4"></div>
<div class="a" style="left:453px;top:529px;width:5px;height:5px;border:1px solid #aaa"><div class="a" style="left:1px;top:1px;width:1px;height:1px;background:#888"></div></div>
<div class="t" style="left:476px;top:527px;font-size:6.85px;color:#333">Test 340/PROCESS 1/FAN GROUP/FAN 1/motor/NdE bearing/RS2T(focUS-256k)</div>
<div class="a" style="left:462px;top:537px;width:11px;height:11px;border-right:1px solid #ddd;border-bottom:1px solid #ccc;background:#fafafa"></div>
<div class="a" style="left:473px;top:548px;width:731px;height:1px;background:#e4e4e4"></div>
<div class="a" style="left:453px;top:541px;width:5px;height:5px;border:1px solid #aaa"><div class="a" style="left:1px;top:1px;width:1px;height:1px;background:#888"></div></div>
<div class="t" style="left:476px;top:539px;font-size:6.85px;color:#333">Test 340/PROCESS 1/FAN GROUP/FAN 1/motor/NdE bearing/RS2NL100(focUS-256k)</div>
<div class="a" style="left:462px;top:548px;width:11px;height:11px;border-right:1px solid #ddd;border-bottom:1px solid #ccc;background:#fafafa"></div>
<div class="a" style="left:473px;top:559px;width:731px;height:1px;background:#e4e4e4"></div>
<div class="a" style="left:453px;top:552px;width:5px;height:5px;border:1px solid #aaa"><div class="a" style="left:1px;top:1px;width:1px;height:1px;background:#888"></div></div>
<div class="t" style="left:476px;top:550px;font-size:6.85px;color:#333">Test 340/PROCESS 1/FAN GROUP/FAN 1/motor/NdE bearing/RS2T(Ht-32k)</div>
<div class="a" style="left:462px;top:559px;width:11px;height:11px;border-right:1px solid #ddd;border-bottom:1px solid #ccc;background:#fafafa"></div>
<div class="a" style="left:473px;top:570px;width:731px;height:1px;background:#e4e4e4"></div>
<div class="a" style="left:453px;top:563px;width:5px;height:5px;border:1px solid #aaa"><div class="a" style="left:1px;top:1px;width:1px;height:1px;background:#888"></div></div>
<div class="t" style="left:476px;top:561px;font-size:6.85px;color:#333">Test 340/PROCESS 1/FAN GROUP/FAN 1/motor/NdE bearing/RS2T(Fcs-128k)</div>
<div class="a" style="left:1203px;top:479px;width:1px;height:166px;background:#d0d0d0"></div>
<div class="a" style="left:594px;top:617px;width:20px;height:21px;border:1px solid #d4d4d4;border-radius:3px;background:linear-gradient(#fbfbfb,#ececec)"></div>
<div class="t" style="left:602px;top:619px;font-size:5px;color:#555">&#x25BE;</div>
</div></body></html>
